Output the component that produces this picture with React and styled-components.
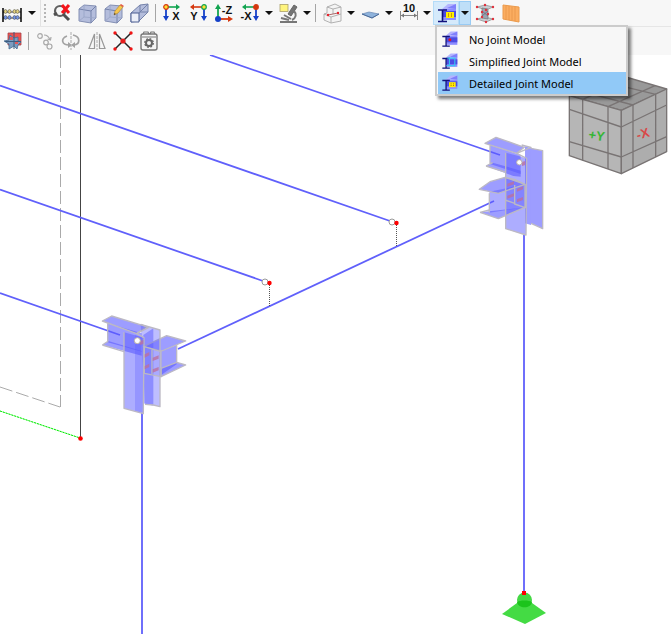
import React, { useState } from 'react';
import styled, { createGlobalStyle } from 'styled-components';

const GlobalStyle = createGlobalStyle`
    * {
        box-sizing: border-box;
    }
    body {
        margin: 0;
        background: #fff;
        font-family: 'Noto Sans', 'Open Sans', sans-serif;
    }
`;

const Page = styled.div`
    display: flex;
    flex-direction: column;
    height: 100vh;
    overflow: hidden;
`;

const Toolbar = styled.div`
    display: flex;
    align-items: center;
    flex: none;
    height: ${(p) => (p.$divided ? '27px' : '28px')};
    background: #f7f7f7;
    border-bottom: ${(p) => (p.$divided ? '1px solid #e6e6e6' : 'none')};
`;

const ToolButton = styled.button`
    display: flex;
    align-items: center;
    justify-content: center;
    flex: none;
    width: 26px;
    height: 24px;
    padding: 0;
    border: 1px solid ${(p) => (p.$active ? '#b5dcf8' : 'transparent')};
    background: ${(p) => (p.$active ? '#d5eafb' : 'transparent')};
    &:hover {
        background: #d5eafb;
    }
`;

const ArrowButton = styled(ToolButton)`
    width: 12px;
    border-color: ${(p) => (p.$active ? '#99ccf5' : 'transparent')};
    background: ${(p) => (p.$active ? '#bfdff8' : 'transparent')};
`;

const Caret = styled.span`
    border: 4px solid transparent;
    border-top-color: #111;
    border-bottom-width: 0;
`;

const Separator = styled.span`
    flex: none;
    width: 6px;
    height: ${(p) => (p.$light ? '26px' : '18px')};
    border-left: 2px solid transparent;
    background: linear-gradient(90deg, ${(p) => (p.$light ? '#e2e2e2' : '#a5a5a5')} 1px, transparent 1px) padding-box;
`;

const Handle = styled.span`
    flex: none;
    width: 5px;
    height: 18px;
    background: radial-gradient(circle at 1px 1px, #b5b5b5 1px, transparent 1px) 0 0 / 5px 4px;
`;

const Split = styled.div`
    position: relative;
    display: flex;
`;

const Menu = styled.div`
    position: absolute;
    z-index: 2;
    top: 24px;
    left: 2px;
    width: 193px;
    padding: 1px 0 0 1px;
    border: 2px solid #ccc;
    background: #f7f7f7;
    box-shadow: 3px 3px 3px rgba(0, 0, 0, 0.5);
`;

const MenuItem = styled.button`
    display: flex;
    align-items: center;
    gap: 10px;
    width: 100%;
    height: 22px;
    padding: 0 1px;
    border: none;
    background: ${(p) => (p.$selected ? '#91c9f7' : 'transparent')};
    color: #000;
    font-family: inherit;
    font-size: 11px;
    text-align: left;
    white-space: nowrap;
`;

const Viewport = styled.main`
    position: relative;
    flex: 1;
    min-height: 0;
    background: #fff;
`;

const Scene = styled.svg`
    display: block;
    width: 100%;
    height: 100%;
`;

const NavCube = styled.svg`
    position: absolute;
    top: 20px;
    right: 0;
    width: 111px;
    height: 105px;
`;

const Icon = ({ size = 24, children }) => (
    <svg width={size} height={size} viewBox="0 0 24 24" fill="none" aria-hidden="true">
        {children}
    </svg>
);

const AbacusIcon = () => (
    <Icon>
        <path d="M2 11h18M2 17h18" stroke="#444" />
        {[5, 9, 14, 17].map((x) => (
            <g key={x} stroke="#444" strokeWidth=".5">
                <ellipse cx={x - 0.5} cy="10.5" rx="1.6" ry="2" fill="#e0cf7c" />
                <ellipse cx={x - 0.5} cy="16.5" rx="1.6" ry="2" fill="#6f92e6" />
            </g>
        ))}
        <path d="M2 7v14M20 7v14" stroke="#000" strokeWidth="1.5" />
    </Icon>
);

const FindIcon = () => (
    <Icon>
        <circle cx="10" cy="10" r="5" stroke="#606060" strokeWidth="2.2" />
        <path d="M4 14l3-2M13 13l6 6" stroke="#505050" strokeWidth="3" />
        <path d="M12 4l7 8M19 4l-7 8" stroke="#f5141b" strokeWidth="3" />
    </Icon>
);

const CubeIcon = ({ edit }) => (
    <Icon>
        <path d="M3 8l5-4 12 1v12l-5 5-12-2z" fill="#b4bddc" stroke="#8490b4" />
        <path d="M3 8l12 2v12M15 10l5-5" stroke="#7482aa" />
        <path d="M8 4v12l12 1M8 16l-5 4" stroke="#98a3c5" strokeWidth=".8" />
        {edit && (
            <g>
                <path d="M12 14l1-4 5-6 3 2-5 6z" fill="#f6c64d" stroke="#b98d35" strokeWidth=".7" />
                <path d="M18 4l1-1 3 2-1 1z" fill="#e65643" />
                <path d="M12 14l.5-2 1.3 1z" fill="#333" />
            </g>
        )}
    </Icon>
);

const ExtrudeIcon = () => (
    <Icon>
        <path d="M3 12l9-8 8-1v8l-9 9-8 1z" fill="#b4bddc" stroke="#7482aa" />
        <path d="M12 4v7l8 0M12 11l-9 10M11 12l9-9" stroke="#7482aa" />
        <path d="M3 12h8v9H3z" fill="#eceff8" stroke="#4b5c91" />
    </Icon>
);

const arrowHeads = {
    right: 'M20 6l-4-3v6z',
    left: 'M4 6l4-3v6z',
};

const AxisLabel = styled.text`
    fill: #111;
    font: bold 11px 'Liberation Sans', sans-serif;
    text-anchor: middle;
`;

const AxisIcon = ({ label, node, ring, side, color }) => {
    const x = side === 'right' ? 6 : 18;
    const end = side === 'right' ? 17 : 7;
    return (
        <Icon>
            <path d={`M${x} 6H${end}`} stroke={color} strokeWidth="1.6" />
            <path d={arrowHeads[side]} fill={color} />
            <path d={`M${x} 6v11`} stroke="#1440c8" strokeWidth="1.8" />
            <path d={`M${x} 20l-3-5h6z`} fill="#1440c8" />
            <circle cx={x} cy="6" r="2.3" fill={node} stroke={ring} strokeWidth="1.2" />
            <AxisLabel x={side === 'right' ? 16 : 8} y="19">{label}</AxisLabel>
        </Icon>
    );
};

const AxisZIcon = () => (
    <Icon>
        <path d="M6 18V7" stroke="#12a450" strokeWidth="1.8" />
        <path d="M6 3l-3 5h6z" fill="#12a450" />
        <path d="M6 18h11" stroke="#d5380f" strokeWidth="1.8" />
        <path d="M21 18l-5-3v6z" fill="#d5380f" />
        <circle cx="6" cy="18" r="3" fill="#1440c8" />
        <AxisLabel x="15" y="13">-Z</AxisLabel>
    </Icon>
);

const MicroscopeIcon = () => (
    <Icon>
        <path d="M18 4l3 2-6 9-3-2z" fill="#747474" stroke="#666" />
        <path d="M8 14l7 4M18 10c3 3 2 7-2 9" stroke="#777" strokeWidth="2" />
        <path d="M5 17l8 2M4 21h17" stroke="#777" strokeWidth="2" />
        <rect x="4" y="3.5" width="8" height="7" fill="#fff47d" stroke="#aaa06a" strokeWidth=".8" />
    </Icon>
);

const SectionBoxIcon = () => (
    <Icon>
        <path d="M7 6l8-3 6 3v14l-10 2-7-3v-6l3-1z" fill="#f4f4f4" stroke="#aaa" strokeWidth=".9" />
        <path d="M7 6l6 2 8-2M13 8v5M4 13l7 3 10-3M11 16v6" stroke="#aaa" strokeWidth=".9" />
        <path d="M8 14l10-2" stroke="#9a4a4a" strokeWidth=".8" />
        <circle cx="8" cy="14" r="1.2" fill="#e8202a" />
        <circle cx="18" cy="12" r="1.2" fill="#e8202a" />
    </Icon>
);

const PlaneIcon = () => (
    <Icon>
        <path d="M4 13l7-2 10 2-7 4z" fill="#8fb3dc" stroke="#6888b3" strokeWidth=".7" />
        <path d="M4 13l10 4 7-4" stroke="#4a6a98" />
    </Icon>
);

const DimensionIcon = () => (
    <Icon>
        <path d="M4.5 10v9M21.5 10v9M5 14.5h16" stroke="#888" />
        <path d="M5 14.5l3-2v4zM21 14.5l-3-2v4z" fill="#777" />
        <AxisLabel x="13" y="11">10</AxisLabel>
    </Icon>
);

const JointIcon = ({ kind, size }) => (
    <Icon size={size}>
        <path d="M8 8l6-5h8v5z" fill="#b4b4ff" />
        <path d="M13 7l9-4v5z" fill="#7f7ffc" />
        <path d="M9 8h13v11H9z" fill="#8c8cff" />
        <path d="M9 10h13v6H9z" fill="#4c4ce2" />
        <path d="M4 9h9M8.5 9v11M4 20.5h9" stroke="#11117d" strokeWidth="1.6" />
        {kind === 'none' && <circle cx="13" cy="13" r="1.8" fill="#e8161c" />}
        {kind === 'simplified' && (
            <path d="M10 8.5h9v9H9M12.5 9v8" stroke="#36c7f4" strokeWidth="1.3" />
        )}
        {kind === 'detailed' && (
            <g>
                <path d="M12 11h8v6h-8z" fill="#fff000" />
                <path d="M14 13h1M17 13h1M14 15h1M17 15h1" stroke="#a33b16" />
            </g>
        )}
    </Icon>
);

const MeshIcon = () => (
    <Icon>
        <path d="M5 6l8-2 8 2-7 3zM5 18l8-2 8 2-7 3z" fill="#c9cdd2" stroke="#888" strokeWidth=".7" />
        <path d="M10 7l6 1v10l-6-1z" fill="#9aa5b2" stroke="#777" strokeWidth=".7" />
        <path d="M10 10l6 5M16 10l-6 5" stroke="#667" strokeWidth=".7" />
        {[[5, 6], [13, 4], [21, 6], [14, 9], [10, 11], [16, 13], [10, 16], [5, 18], [14, 21], [21, 18]].map(([x, y]) => (
            <circle key={`${x}-${y}`} cx={x} cy={y} r="1.2" fill="#e0303c" />
        ))}
    </Icon>
);

const TimberIcon = () => (
    <Icon>
        <path d="M5 4l16 2v15L5 18z" fill="#fbad60" stroke="#eb9a4c" />
        <path d="M8 4.5v14M11 5v14M14 5.5v14M17 6v14" stroke="#e8964a" strokeWidth=".8" />
    </Icon>
);

const IntersectIcon = () => (
    <Icon>
        <path d="M7 4h13v12H7z" fill="#ef5350" stroke="#a3424a" strokeWidth=".8" />
        <path d="M3 12l5-1 1-5 4 3 4-1v4l3 1-3 3-1 4-3-3-5 3v-5z" fill="#7c9cc0" stroke="#456b92" strokeWidth=".8" />
        <path d="M13 3v17M4 12.5h16" stroke="#3b5c80" />
        <path d="M9 8h3v3H9zM14 13h3v2h-3z" fill="#e2585c" />
    </Icon>
);

const CopyNodesIcon = () => (
    <Icon>
        <g stroke="#a9a9a9" strokeWidth="1.2">
            <circle cx="7" cy="7" r="2.3" />
            <circle cx="13" cy="13.5" r="2.3" />
            <circle cx="16.5" cy="17.5" r="2.5" />
            <path d="M11 6c3 0 5 2 6 5M14.5 10l3 1 .5-3" />
        </g>
    </Icon>
);

const RotateIcon = () => (
    <Icon>
        <path d="M8 7c-7 3-5 9 2 9M14 6c8 2 7 9 1 10" stroke="#a3a3a3" strokeWidth="1.7" />
        <path d="M9 13l4 3-4 3zM16 13l-4 3 4 3z" fill="#a3a3a3" />
        <path d="M12 3v18" stroke="#aaa" strokeDasharray="3 1" />
    </Icon>
);

const MirrorIcon = () => (
    <Icon>
        <path d="M4 19.5h5.5V5zM20 19.5h-5.500V5z" stroke="#999" strokeWidth="1.2" />
        <path d="M12 3v18" stroke="#aaa" strokeDasharray="3 1" />
    </Icon>
);

const CrossNodesIcon = () => (
    <Icon>
        <path d="M4 4l16 16M20 4L4 20" stroke="#222" strokeWidth="1.5" />
        <circle cx="12" cy="12" r="2.6" fill="#e51c1c" />
        {[[4, 4], [20, 4], [4, 20], [20, 20]].map(([x, y]) => (
            <circle key={`${x}-${y}`} cx={x} cy={y} r="1.7" fill="#f01414" />
        ))}
    </Icon>
);

const SettingsIcon = () => (
    <Icon>
        <rect x="4" y="5" width="16" height="16" rx="2" fill="#f5f5f5" stroke="#777" strokeWidth="1.4" />
        <path d="M6 5l1-2h4l1 2M13 5l1-2h3l1 2M5 8h14" stroke="#777" strokeWidth="1.2" />
        <circle cx="12" cy="14" r="3" stroke="#666" strokeWidth="2" />
        <circle cx="12" cy="14" r="4.300" stroke="#666" strokeWidth="1.3" strokeDasharray="1.8 1.577" />
    </Icon>
);

const Tool = ({ label, children, ...rest }) => (
    <ToolButton type="button" aria-label={label} {...rest}>
        {children}
    </ToolButton>
);

const More = ({ label, ...rest }) => (
    <ArrowButton type="button" aria-label={label} {...rest}>
        <Caret />
    </ArrowButton>
);

const jointModels = [
    { kind: 'none', label: 'No Joint Model' },
    { kind: 'simplified', label: 'Simplified Joint Model' },
    { kind: 'detailed', label: 'Detailed Joint Model' },
];

// Steel joint at the far corner, drawn at three units per pixel
const FarJoint = () => (
    <g transform="translate(470 130) scale(.333333)" fill="#5c5cff" fillOpacity=".6" strokeLinejoin="round">
        <path d="M60 45L60 102L152 132V75z" />
        <path d="M48 108L68 98L152 122V140L130 138z" />
        <path d="M58 185V248L165 232V163z" fillOpacity=".5" />
        <path d="M155 45L165 50V280L183 285V55z" fillOpacity=".6" />
        <path d="M107 68V296L168 315L170 85z" fillOpacity=".5" />
        <g stroke="#bcb9c4" strokeWidth="4">
            <path d="M45 40L78 22L163 52L140 70z" />
            <path d="M60 46V101M48 108L68 98M48 108L105 126" />
            <path d="M28 178L60 155L105 142L165 163L85 190z" />
            <path d="M30 247L58 240M30 247L85 266L165 232" />
            <path d="M58 190V248" />
            <path d="M183 55L218 62V296L183 280" />
            <path d="M140 70L183 52L155 45M107 68V296L168 315L170 85L140 70M134 165V222L165 233V163" fill="none" />
            <path d="M105 142L134 148L165 163M105 210L134 220" fill="none" />
        </g>
        <g fill="#bc719f" fillOpacity=".8">
            <path d="M112 161l20-7v9l-20 7zM141 176l18-7v9l-18 7zM112 197l20-7v9l-20 7zM141 208l18-7v9l-18 7zM156 96l10-3v12l-10 3z" />
        </g>
        <circle cx="148" cy="97" r="8" fill="#fff" fillOpacity="1" stroke="#bbb0a8" strokeWidth="3" />
    </g>
);

const NearJoint = () => (
    <g transform="translate(95 305) scale(.333333)" fill="#5c5cff" fillOpacity=".6" strokeLinejoin="round">
        <path d="M38 55V112L140 140V85z" />
        <path d="M22 120L40 108L140 138V152z" />
        <path d="M120 90V318L147 325V98z" fillOpacity=".3" />
        <path d="M145 90V295L175 302V70z" fillOpacity=".5" />
        <path d="M198 138L245 120V178L198 210z" fillOpacity=".6" />
        <path d="M87 82V310L145 326L147 98z" fillOpacity=".5" />
        <g stroke="#bcb9c4" strokeWidth="4">
            <path d="M22 48L50 33L155 65L125 86z" />
            <path d="M38 55V112M22 120L40 108M22 120L87 140" />
            <path d="M145 125L215 92L272 108L200 138z" />
            <path d="M198 215L272 180L245 172L198 190z" />
            <path d="M245 120V172" />
            <path d="M137 58L195 75V305L175 300L150 298" fillOpacity=".4" />
            <path d="M125 86L160 68L137 58M87 82V310L145 326L147 98L125 86" fill="none" />
            <path d="M148 125L198 140V215L148 205zM171 134V207" fillOpacity=".2" />
        </g>
        <g fill="#bc719f" fillOpacity=".8">
            <path d="M149 148l14-7v10l-14 7zM173 158l18-7v10l-18 7zM149 183l14-7v10l-14 7zM173 193l18-7v10l-18 7zM135 108l10-3v12l-10 3z" />
        </g>
        <circle cx="127" cy="107" r="9" fill="#fff" fillOpacity="1" stroke="#bbb0a8" strokeWidth="3" />
    </g>
);

const Release = ({ x, y, drop }) => (
    <g>
        <path d={`M${x}.5 ${y}V${drop}`} stroke="#555" strokeDasharray="1 1" />
        <circle cx={x - 4} cy={y - 1} r="3" fill="#fff" stroke="#999" />
        <circle cx={x + 0.5} cy={y} r="2.2" fill="#f00" />
    </g>
);

const StructureScene = () => (
    <Scene viewBox="0 55 671 579" preserveAspectRatio="xMinYMin slice" fill="none" role="img" aria-label="Frame structure">
        <path d="M60.5 55V407" stroke="#aaa" strokeDasharray="13 4" />
        <path d="M0 387L60 407" stroke="#aaa" strokeDasharray="13 4" />
        <path d="M0 411L80 438" stroke="#b8ffb8" />
        <path d="M0 411L80 438" stroke="#00e800" strokeDasharray="2 1" />
        <path d="M80.5 55V438" stroke="#444" />
        <circle cx="80.5" cy="438.5" r="2.3" fill="#f00" />
        <g stroke="#6060fb" strokeWidth="1.8">
            <path d="M210 55L500 155M0 85.5L390 221M0 189.5L263 281M0 293L120 335" />
            <path d="M178 349L494 201" />
            <path d="M524 235V592M142 413V634" />
        </g>
        <Release x={269} y={283} drop={306} />
        <Release x={396} y={223} drop={247} />
        <FarJoint />
        <NearJoint />
        <path d="M502 614L517 603H532L546 613L525 624z" fill="#44db44" />
        <circle cx="524.5" cy="600" r="7.5" fill="#44d844" />
        <path d="M517 602c3-2 12-2 15 0c-1 7-14 7-15 0z" fill="#1cc41c" />
        <rect x="522" y="591" width="4" height="4" fill="#f00" />
    </Scene>
);

const CubeLabel = styled.text`
    fill: ${(p) => p.$color};
    font: bold 13px 'Liberation Sans', sans-serif;
    text-anchor: middle;
`;

const ViewCube = () => (
    <NavCube viewBox="0 0 111 105" role="img" aria-label="View orientation">
        <g transform="scale(.333333)" stroke="#797474" strokeWidth="4" strokeLinejoin="round">
            <path d="M28 62L178 0L320 42L184 106z" fill="#999" />
            <path d="M28 62L184 106V296L28 242z" fill="#b6b6b6" />
            <path d="M184 106L320 42V230L184 296z" fill="#adadad" />
            <path
                d="M28 103L184 156L320 90M28 200L184 246L320 185M68 73V256M144 95V282M219 90V279M287 58V246M68 50L219 90M130 20L287 58M68 73L212 10M144 95L285 32"
                fill="none"
            />
        </g>
        <CubeLabel $color="#35b535" x="36" y="65" transform="rotate(8 36 65)">+Y</CubeLabel>
        <CubeLabel $color="#d94848" x="84" y="63" transform="rotate(-16 84 63)">-X</CubeLabel>
    </NavCube>
);

export default function App() {
    const [menuOpen, setMenuOpen] = useState(true);
    const [jointModel, setJointModel] = useState('detailed');

    const handleSelect = (kind) => {
        setJointModel(kind);
        setMenuOpen(false);
    };

    return (
        <Page>
            <GlobalStyle />
            <Toolbar $divided role="toolbar" aria-label="View">
                <Tool label="Calculator"><AbacusIcon /></Tool>
                <More label="Calculator options" />
                <Separator $light />
                <Handle />
                <Tool label="Clear search"><FindIcon /></Tool>
                <Tool label="Solid"><CubeIcon /></Tool>
                <Tool label="Edit solid"><CubeIcon edit /></Tool>
                <Tool label="Extrude"><ExtrudeIcon /></Tool>
                <Separator />
                <Tool label="View in X"><AxisIcon label="X" side="right" color="#12a450" node="#ffe02e" ring="#d5380f" /></Tool>
                <Tool label="View in Y"><AxisIcon label="Y" side="left" color="#d5380f" node="#ffe02e" ring="#12a450" /></Tool>
                <Tool label="View in -Z"><AxisZIcon /></Tool>
                <Tool label="View in -X"><AxisIcon label="-X" side="left" color="#12a450" node="#d5380f" ring="#d5380f" /></Tool>
                <More label="More views" />
                <Tool label="Inspect"><MicroscopeIcon /></Tool>
                <More label="Inspect options" />
                <Separator />
                <Tool label="Clipping box"><SectionBoxIcon /></Tool>
                <More label="Clipping box options" />
                <Tool label="Work plane"><PlaneIcon /></Tool>
                <More label="Work plane options" />
                <Tool label="Dimensions"><DimensionIcon /></Tool>
                <More label="Dimension options" />
                <Split>
                    <Tool label="Joint model" $active={menuOpen}><JointIcon kind={jointModel} /></Tool>
                    <More label="Joint model options" aria-expanded={menuOpen} $active={menuOpen} onClick={() => setMenuOpen(!menuOpen)} />
                    {menuOpen && (
                        <Menu role="menu">
                            {jointModels.map(({ kind, label }) => (
                                <MenuItem key={kind} type="button" role="menuitem" $selected={kind === jointModel} onClick={() => handleSelect(kind)}>
                                    <JointIcon kind={kind} size={20} />
                                    {label}
                                </MenuItem>
                            ))}
                        </Menu>
                    )}
                </Split>
                <Tool label="Mesh"><MeshIcon /></Tool>
                <Tool label="Timber panel"><TimberIcon /></Tool>
            </Toolbar>
            <Toolbar role="toolbar" aria-label="Edit">
                <Tool label="Intersect"><IntersectIcon /></Tool>
                <Separator />
                <Tool label="Copy nodes"><CopyNodesIcon /></Tool>
                <Tool label="Rotate"><RotateIcon /></Tool>
                <Tool label="Mirror"><MirrorIcon /></Tool>
                <Tool label="Connect nodes"><CrossNodesIcon /></Tool>
                <Tool label="Settings"><SettingsIcon /></Tool>
            </Toolbar>
            <Viewport>
                <StructureScene />
                <ViewCube />
            </Viewport>
        </Page>
    );
}
